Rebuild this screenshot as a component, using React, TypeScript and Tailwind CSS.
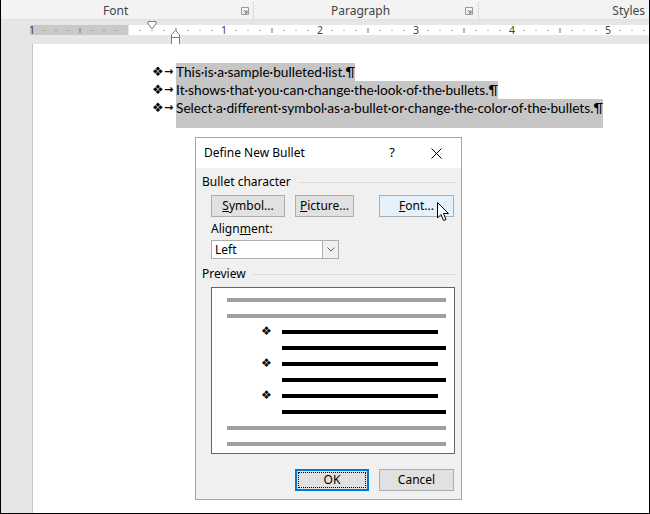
import React from "react";

const ui = "font-['Noto_Sans',sans-serif]";
const doc = "font-['Lato','Liberation_Sans',sans-serif]";

const lines = [
  "This·is·a·sample·bulleted·list.¶",
  "It·shows·that·you·can·change·the·look·of·the·bullets.¶",
  "Select·a·different·symbol·as·a·bullet·or·change·the·color·of·the·bullets.¶",
];

function Launcher() {
  return (
    <svg width="8" height="8" viewBox="0 0 8 8" className="shrink-0">
      <path d="M0.5 7.5V0.5H7.5V7.5H0.5" fill="none" stroke="#9a9a9a" />
      <path d="M3 3L6 6M6 3.5V6H3.5" fill="none" stroke="#6a6a6a" />
    </svg>
  );
}

function Ruler() {
  const marks: React.ReactNode[] = [];
  for (let k = -7; k <= 43; k++) {
    if (k === 0) continue;
    const x = 127 + 12 * k;
    if (k % 8 === 0) {
      marks.push(
        <text key={k} x={x} y={14} textAnchor="middle" fontSize="10.5" fill="#444" fontFamily="Noto Sans, sans-serif">
          {Math.abs(k / 8)}
        </text>
      );
    } else if (k % 4 === 0) {
      marks.push(<rect key={k} x={x - 0.5} y={8} width={1} height={5} fill="#777" />);
    } else {
      marks.push(<rect key={k} x={x - 0.5} y={10} width={1} height={1} fill="#777" />);
    }
  }
  marks.push(
    <text key="l1" x={31} y={14} textAnchor="middle" fontSize="10.5" fill="#444" fontFamily="Noto Sans, sans-serif">
      1
    </text>
  );
  return (
    <svg width="648" height="24" viewBox="0 0 648 24" className="block overflow-visible">
      <rect x="29" y="5" width="98" height="10" fill="#c9c9c9" />
      <rect x="128" y="5" width="520" height="10" fill="#ffffff" />
      {marks}
      <polygon points="147,1.5 155,1.5 155,4 151,9 147,4" fill="#fff" stroke="#7a7a7a" />
      <polygon points="170.5,17.5 170.5,14.5 174.5,10.5 178.5,14.5 178.5,17.5" fill="#fff" stroke="#7a7a7a" />
      <rect x="170.5" y="17.5" width="8" height="7" fill="#fff" stroke="#7a7a7a" />
    </svg>
  );
}

function Btn({ children, className = "", w }: { children: React.ReactNode; className?: string; w: string }) {
  return (
    <div className={`flex h-[22px] items-center justify-center border border-[#adadad] bg-[#e1e1e1] text-[12px] text-black ${w} ${className}`}>
      {children}
    </div>
  );
}

function GroupHeader({ label }: { label: string }) {
  return (
    <div className="flex h-[16px] items-center pl-[6px] pr-[5px]">
      <span className="text-[12px] text-black">{label}</span>
      <div className="ml-[7px] h-px flex-1 bg-[#dcdcdc]" />
    </div>
  );
}

function Dialog() {
  const gray = "h-[4px] w-[219px] bg-[#a0a0a0]";
  return (
    <div className={`absolute left-[194px] top-[137px] flex h-[363px] w-[267px] flex-col border border-[#6fb5e6] bg-[#f0f0f0] ${ui}`}>
      <div className="flex h-[30px] items-center bg-white pl-[8px] text-[12px] text-black">
        <span>Define New Bullet</span>
        <span className="ml-auto mr-[36px] text-[13px]">?</span>
        <svg width="11" height="11" viewBox="0 0 11 11" className="mr-[19px]">
          <path d="M0.5 0.5L10.5 10.5M10.5 0.5L0.5 10.5" stroke="#000" strokeWidth="1" />
        </svg>
      </div>
      <div className="mt-[6px]">
        <GroupHeader label="Bullet character" />
      </div>
      <div className="mt-[5px] flex pl-[15px]">
        <Btn w="w-[74px]">
          <span><u>S</u>ymbol...</span>
        </Btn>
        <Btn w="w-[59px]" className="ml-[10px]">
          <span><u>P</u>icture...</span>
        </Btn>
        <Btn w="w-[75px]" className="ml-[25px] border-[#0078d7] bg-[#e5f1fb]">
          <span><u>F</u>ont...</span>
        </Btn>
      </div>
      <div className="mt-[4px] flex h-[16px] items-center pl-[15px] text-[12px] text-black">
        <span>Align<u>m</u>ent:</span>
      </div>
      <div className="ml-[15px] mt-[3px] flex h-[19px] w-[128px] border border-[#adadad] bg-white text-[12px] text-black">
        <span className="flex flex-1 items-center pl-[3px]">Left</span>
        <div className="flex w-[16px] items-center justify-center border-l border-[#adadad] bg-[#f0f0f0]">
          <svg width="8" height="5" viewBox="0 0 8 5">
            <path d="M0.5 0.5L4 4L7.5 0.5" fill="none" stroke="#606060" />
          </svg>
        </div>
      </div>
      <div className="mt-[7px]">
        <GroupHeader label="Preview" />
      </div>
      <div className="ml-[15px] mt-[5px] flex h-[167px] w-[244px] flex-col gap-[12px] border border-[#646464] bg-white pl-[15px] pt-[10px]">
        <div className={gray} />
        <div className={gray} />
        {[0, 1, 2].map((i) => (
          <React.Fragment key={i}>
            <div className="relative h-[4px]">
              <span className="absolute left-[34px] top-[-7px] text-[12px] leading-[16px] font-['DejaVu_Sans',sans-serif] text-black">❖</span>
              <div className="ml-[55px] h-[4px] w-[156px] bg-black" />
            </div>
            <div className="ml-[55px] h-[4px] w-[164px] bg-black" />
          </React.Fragment>
        ))}
        <div className={gray} />
        <div className={gray} />
      </div>
      <div className="mt-[15px] flex pl-[99px]">
        <div className="flex h-[22px] w-[74px] items-center justify-center border-2 border-[#0078d7] bg-[#e1e1e1] p-[1px]">
          <div className="flex h-full w-full items-center justify-center border border-dotted border-black text-[12px] text-black">OK</div>
        </div>
        <Btn w="w-[75px]" className="ml-[10px]">
          <span>Cancel</span>
        </Btn>
      </div>
    </div>
  );
}

function Cursor() {
  return (
    <svg width="13" height="20" viewBox="0 0 13 20" className="absolute left-[436px] top-[202px]">
      <path
        d="M0.5 0.5V16L4 12.5L6.5 18.5L9 17.5L6.5 11.5H11.5Z"
        fill="#fff"
        stroke="#000"
        strokeWidth="1"
        strokeLinejoin="miter"
      />
    </svg>
  );
}

export default function App() {
  return (
    <div className="relative flex h-[514px] w-[650px] flex-col overflow-hidden border-x border-b border-black bg-white">
      <div className={`flex h-[20px] shrink-0 border-b border-[#e0e0e0] bg-[#f3f3f3] pt-[2px] text-[12px] text-[#444] ${ui}`}>
        <div className="flex w-[253px] items-center border-r border-[#dadada]">
          <span className="ml-[102px]">Font</span>
          <div className="ml-auto mr-[4px]">
            <Launcher />
          </div>
        </div>
        <div className="flex w-[225px] items-center border-r border-[#dadada]">
          <span className="ml-[77px]">Paragraph</span>
          <div className="ml-auto mr-[5px]">
            <Launcher />
          </div>
        </div>
        <div className="flex flex-1 items-center justify-end pr-[4px]">
          <span>Styles</span>
        </div>
      </div>
      <div className="h-[24px] shrink-0 bg-[#e6e6e6]">
        <Ruler />
      </div>
      <div className="flex flex-1">
        <div className="w-[32px] border-r border-[#c6c6c6] bg-[#e6e6e6]" />
        <div className={`flex flex-1 flex-col bg-white pl-[119px] pt-[19px] text-[13.7px] text-black ${doc}`}>
          {lines.map((t, i) => (
            <div key={i} className="flex items-start">
              <span className="w-[12px] text-[13px] leading-[18px] font-['DejaVu_Sans',sans-serif]">❖</span>
              <span className="w-[12px] text-[11px] font-bold leading-[18px] font-['DejaVu_Sans',sans-serif]">→</span>
              <span className={`bg-[#c6c6c6] leading-[18px] ${i === 2 ? "h-[29px]" : "h-[18px]"}`}>{t}</span>
            </div>
          ))}
        </div>
      </div>
      <Dialog />
      <Cursor />
    </div>
  );
}
